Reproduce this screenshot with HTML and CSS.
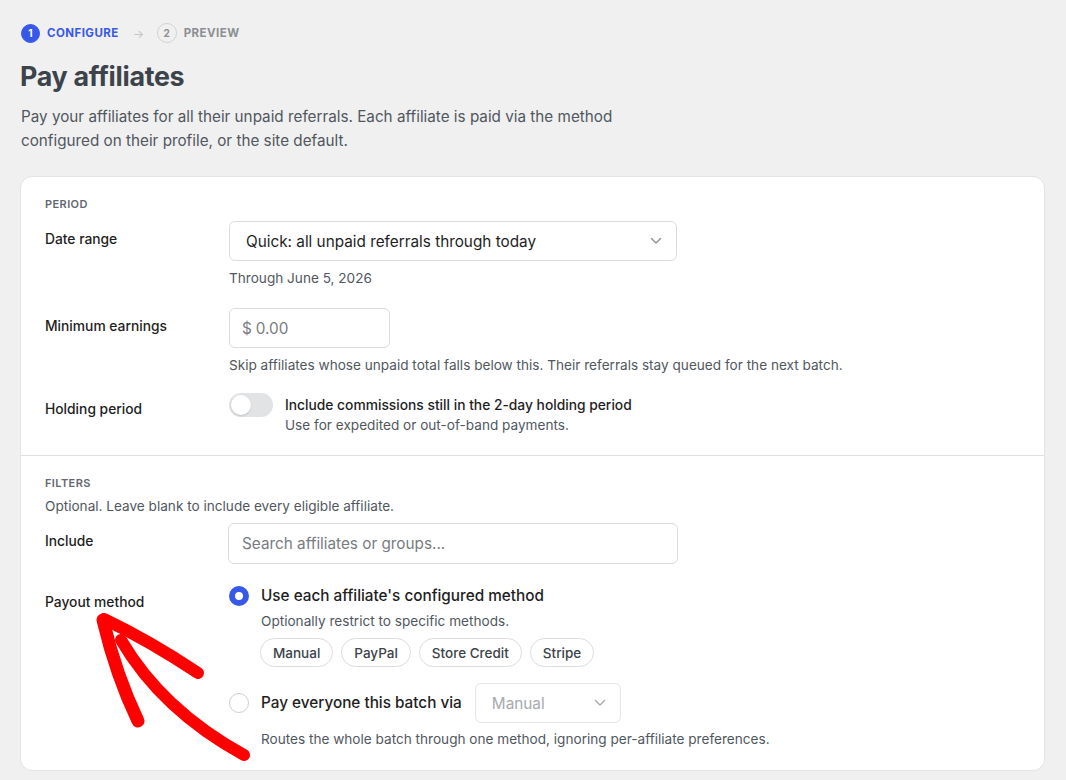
FILE: index.html
```html
<!DOCTYPE html>
<html>
<head>
    <meta name="viewport" content="width=device-width, initial-scale=1.0">
    <title>Pay affiliates</title>
    <link rel="stylesheet" href="styles.css">
</head>
<body>
    <div class="page">
        <ol class="steps">
            <li class="step current"><span class="step-num">1</span>Configure</li>
            <li class="step-sep">&rarr;</li>
            <li class="step"><span class="step-num">2</span>Preview</li>
        </ol>

        <h1>Pay affiliates</h1>
        <p class="intro">Pay your affiliates for all their unpaid referrals. Each affiliate is paid via the method configured on their profile, or the site default.</p>

        <form class="card">
            <section class="panel">
                <h2 class="panel-title">Period</h2>

                <div class="field">
                    <label class="field-label">Date range</label>
                    <div class="field-control">
                        <div class="select wide">
                            <span>Quick: all unpaid referrals through today</span>
                            <svg class="chevron" width="12" height="8" viewBox="0 0 12 8"><path d="M1.5 1.5 6 6l4.5-4.5" fill="none" stroke="#8c8f94" stroke-width="1.4" stroke-linecap="round" stroke-linejoin="round"/></svg>
                        </div>
                        <p class="help">Through June 5, 2026</p>
                    </div>
                </div>

                <div class="field">
                    <label class="field-label">Minimum earnings</label>
                    <div class="field-control">
                        <div class="input money">
                            <span class="prefix">$</span>
                            <input type="text" placeholder="0.00">
                        </div>
                        <p class="help">Skip affiliates whose unpaid total falls below this. Their referrals stay queued for the next batch.</p>
                    </div>
                </div>

                <div class="field">
                    <label class="field-label toggle-label">Holding period</label>
                    <div class="field-control toggle-row">
                        <span class="toggle"><span class="knob"></span></span>
                        <div>
                            <div class="option-title small">Include commissions still in the 2-day holding period</div>
                            <p class="help tight">Use for expedited or out-of-band payments.</p>
                        </div>
                    </div>
                </div>
            </section>

            <section class="panel">
                <h2 class="panel-title">Filters</h2>
                <p class="help panel-note">Optional. Leave blank to include every eligible affiliate.</p>

                <div class="field">
                    <label class="field-label">Include</label>
                    <div class="field-control">
                        <div class="input wide">
                            <input type="text" placeholder="Search affiliates or groups...">
                        </div>
                    </div>
                </div>

                <div class="field">
                    <label class="field-label payout-label">Payout method</label>
                    <div class="field-control options">
                        <div class="option">
                            <span class="radio checked"></span>
                            <div>
                                <div class="option-title">Use each affiliate's configured method</div>
                                <p class="help option-help">Optionally restrict to specific methods.</p>
                                <div class="chips">
                                    <span class="chip">Manual</span>
                                    <span class="chip">PayPal</span>
                                    <span class="chip">Store Credit</span>
                                    <span class="chip">Stripe</span>
                                </div>
                            </div>
                        </div>
                        <div class="option">
                            <span class="radio inline"></span>
                            <div>
                                <div class="option-inline">
                                    <span class="option-title">Pay everyone this batch via</span>
                                    <div class="select narrow disabled">
                                        <span>Manual</span>
                                        <svg class="chevron" width="12" height="8" viewBox="0 0 12 8"><path d="M1.5 1.5 6 6l4.5-4.5" fill="none" stroke="#a7aaad" stroke-width="1.4" stroke-linecap="round" stroke-linejoin="round"/></svg>
                                    </div>
                                </div>
                                <p class="help option-help below-select">Routes the whole batch through one method, ignoring per-affiliate preferences.</p>
                            </div>
                        </div>
                    </div>
                </div>
            </section>
        </form>

        <!-- hand-drawn marker pointing at the payout setting -->
        <svg class="annotation" width="1066" height="780" viewBox="0 0 1066 780">
            <g fill="none" stroke="#fe0000" stroke-linecap="round" stroke-linejoin="round">
                <path d="M104 619 Q150 641 198 673" stroke-width="12"/>
                <path d="M103 620 Q116 675 138 721" stroke-width="13"/>
                <path d="M121 640 Q162 710 244 755" stroke-width="12"/>
            </g>
        </svg>
    </div>
</body>
</html>
```

FILE: styles.css
```css
html,
body {
    margin: 0;
    background: #f0f0f0;
    color: #1e1e1e;
    font-family: Inter, "Noto Sans", sans-serif;
    -webkit-font-smoothing: antialiased;
}

.page {
    position: relative;
    padding: 23px 20px 10px 20px;
    min-height: 747px;
}

/* step indicator */
.steps {
    display: flex;
    align-items: center;
    list-style: none;
    margin: 0;
    padding: 0 0 0 1px;
    font-size: 11.5px;
    font-weight: 700;
    letter-spacing: 0.45px;
    text-transform: uppercase;
    color: #8c8f94;
}

.step {
    display: flex;
    align-items: center;
    gap: 7px;
}

.step-num {
    display: flex;
    align-items: center;
    justify-content: center;
    box-sizing: border-box;
    width: 20px;
    height: 20px;
    border: 1.5px solid #d0d2d5;
    border-radius: 50%;
    font-size: 10px;
    letter-spacing: 0;
}

.step.current {
    color: #3858e9;
}

.step.current .step-num {
    width: 19px;
    height: 19px;
    background: #3858e9;
    border-color: #3858e9;
    color: white;
}

.step-sep {
    margin: 0 12px 0 14px;
    color: #c3c4c7;
    font-size: 12px;
    font-weight: 400;
}

h1 {
    margin: 16px 0 0 0;
    font-size: 26.8px;
    line-height: 34px;
    font-weight: 700;
    letter-spacing: -0.3px;
    color: #3c434a;
}

.intro {
    max-width: 604px;
    margin: 12px 0 0 1px;
    font-size: 15.25px;
    line-height: 24px;
    color: #50575e;
}

/* main card */
.card {
    margin-top: 23px;
    background: white;
    border: 1px solid #e3e3e3;
    border-radius: 12px;
    width: 1023px;
}

.panel {
    padding: 19px 24px 21px 24px;
}

.panel + .panel {
    border-top: 1px solid #e0e0e0;
    padding-top: 19px;
    padding-bottom: 22px;
}

.panel-title {
    margin: 0 0 9px 0;
    font-size: 11px;
    line-height: 16px;
    font-weight: 600;
    letter-spacing: 0.4px;
    text-transform: uppercase;
    color: #646970;
}

.field {
    display: grid;
    grid-template-columns: 184px 1fr;
    margin-bottom: 21px;
}

.field:last-child {
    margin-bottom: 0;
}

.field-label {
    padding-top: 8px;
    font-size: 13.8px;
    line-height: 20px;
    font-weight: 500;
}

.toggle-label {
    padding-top: 4px;
}

.payout-label {
    padding-top: 7px;
}

.help {
    margin: 8px 0 0 0;
    font-size: 13.6px;
    line-height: 18px;
    color: #50575e;
}

.help.tight {
    margin-top: 1px;
}

.help.option-help {
    margin-top: 5px;
}

.help.below-select {
    margin-top: 7px;
}

.help.panel-note {
    margin: -3px 0 8px 0;
}

/* inputs */
.select,
.input {
    display: flex;
    align-items: center;
    box-sizing: border-box;
    height: 40px;
    border: 1px solid #dcdcde;
    border-radius: 6px;
    background: white;
    font-size: 15.3px;
}

.select {
    justify-content: space-between;
    padding: 0 14px 0 16px;
}

.wide {
    width: 448px;
}

.input.wide {
    width: 450px;
    height: 41px;
    margin-left: -1px;
}

.narrow {
    width: 146px;
}

.select.disabled {
    border-color: #e6e6e6;
    color: #a7aaad;
}

.input input {
    flex: 1;
    min-width: 0;
    border: none;
    outline: none;
    padding: 0 13px;
    font: inherit;
    color: #1e1e1e;
    background: transparent;
}

.input input::placeholder {
    color: #787c82;
}

.money {
    width: 161px;
}

.money .prefix {
    padding-left: 12px;
    color: #787c82;
}

.money input {
    padding-left: 4px;
}

/* toggle */
.toggle-row {
    display: flex;
    align-items: flex-start;
    gap: 12px;
}

.toggle {
    flex: none;
    position: relative;
    width: 44px;
    height: 24px;
    margin-top: -2px;
    border-radius: 12px;
    background: #e2e3e5;
}

.knob {
    position: absolute;
    top: 2px;
    left: 2px;
    width: 20px;
    height: 20px;
    border-radius: 50%;
    background: white;
    box-shadow: 0 1px 2px rgba(0, 0, 0, 0.15);
}

.option-title {
    font-size: 15.3px;
    line-height: 22px;
    font-weight: 500;
}

.option-title.small {
    font-size: 13.8px;
    line-height: 20px;
}

/* payout options */
.options {
    display: flex;
    flex-direction: column;
    gap: 16px;
}

.option {
    display: flex;
    align-items: flex-start;
    gap: 12px;
}

.radio {
    flex: none;
    box-sizing: border-box;
    width: 20px;
    height: 20px;
    margin-top: 1px;
    border: 1.5px solid #cfd0d3;
    border-radius: 50%;
    background: white;
}

.radio.checked {
    border: 6px solid #3858e9;
}

.radio.inline {
    margin-top: 10px;
}

.option-inline {
    display: flex;
    align-items: center;
    gap: 13px;
}

.chips {
    display: flex;
    gap: 8px;
    margin: 8px 0 0 -1px;
}

.chip {
    display: inline-flex;
    align-items: center;
    box-sizing: border-box;
    height: 29px;
    padding: 0 12px;
    border: 1px solid #dcdcde;
    border-radius: 15px;
    font-size: 13.5px;
    font-weight: 500;
    color: #3c434a;
}

.annotation {
    position: absolute;
    top: 0;
    left: 0;
    pointer-events: none;
}
```
